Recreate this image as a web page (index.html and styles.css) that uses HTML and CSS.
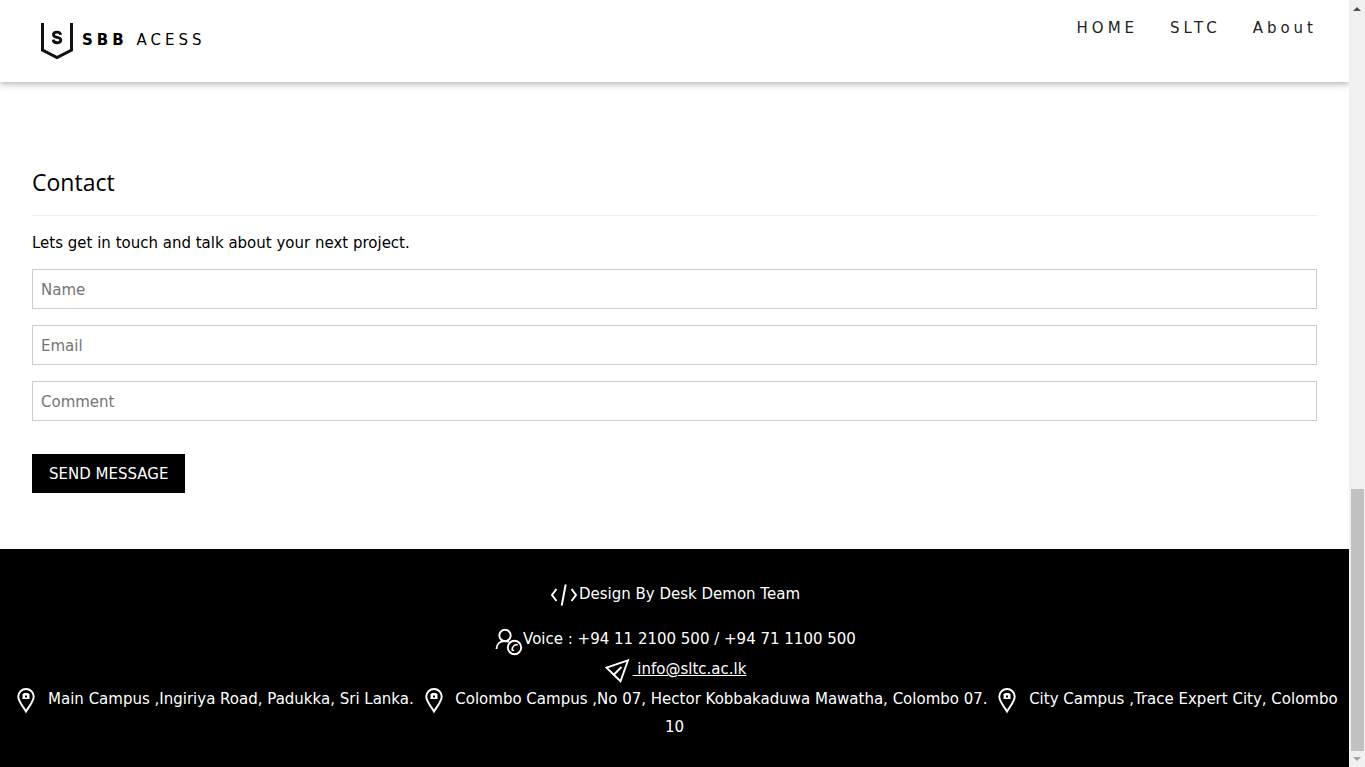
FILE: index.html
```html
<!DOCTYPE html>
<html lang="en">
<head>
<meta charset="utf-8">
<meta name="viewport" content="width=device-width, initial-scale=1">
<title>SBB Acess</title>
<link rel="stylesheet" href="styles.css">
</head>
<body>
<svg class="symbols" aria-hidden="true">
  <symbol id="pin" viewBox="0 0 30 30">
    <path d="M15 26.500C11.500 20.500 7.300 16.500 7.300 11.500a7.700 7.500 0 0 1 15.400 0c0 5-4.200 9-7.700 15z" fill="none" stroke="currentColor" stroke-width="1.900"/>
    <path fill="currentColor" fill-rule="evenodd" d="M11.500 9h1v-1h5v1h1v5h-7zM14 10.500v2h2v-2z"/>
  </symbol>
</svg>
<div class="window">
  <div class="page">
    <header class="bar">
      <a class="brand" href="#home">
        <svg class="brand-mark" viewBox="0 0 34 38" aria-hidden="true">
          <path d="M2.500 1v27L17 35.500 31.500 28V1" fill="none" stroke="#111" stroke-width="3"/>
          <path d="M20.600 12.700c-.3-1.900-1.700-2.600-3.600-2.600-2.100 0-3.500.9-3.500 2.600 0 3.700 7.300 1.700 7.300 5.300 0 1.800-1.600 2.700-3.700 2.700-2.300 0-3.800-.9-3.900-3.100" fill="none" stroke="#111" stroke-width="2.900"/>
        </svg>
        <span><b>SBB</b> ACESS</span>
      </a>
      <nav class="links">
        <a href="#home">HOME</a>
        <a href="#sltc">SLTC</a>
        <a href="#about">About</a>
      </nav>
    </header>
    <main class="contact">
      <h3>Contact</h3>
      <p>Lets get in touch and talk about your next project.</p>
      <form>
        <input type="text" placeholder="Name" aria-label="Name">
        <input type="text" placeholder="Email" aria-label="Email">
        <input type="text" placeholder="Comment" aria-label="Comment">
        <button type="button">SEND MESSAGE</button>
      </form>
    </main>
    <footer class="footer">
      <p class="row credit">
        <svg class="icon" viewBox="0 0 30 30" fill="none" stroke="currentColor" stroke-width="2" aria-hidden="true"><path d="M7.500 10 3 16l4.500 6M22.500 10l4.500 6-4.500 6M16.700 5.500l-4 21"/></svg>
        <span>Design By Desk Demon Team</span>
      </p>
      <p class="row">
        <svg class="icon" viewBox="0 0 30 30" fill="none" stroke="currentColor" stroke-width="1.900" aria-hidden="true"><circle cx="12" cy="11.500" r="5.700"/><path d="M3.500 25c0-5 3.500-8 8.500-8 1.500 0 2.700.3 3.800.9"/><circle cx="21.500" cy="23.500" r="6.700"/><path d="M24.800 20.800c-3.400-.4-5.800 1.800-5.600 5.400l2 .3" stroke-width="1.500"/></svg>
        <span>Voice : +94 11 2100 500 / +94 71 1100 500</span>
      </p>
      <p class="row">
        <svg class="icon" viewBox="0 0 30 30" fill="none" stroke="currentColor" stroke-width="1.900" aria-hidden="true"><path d="M25 6.300 3.500 13.700l6 5.800 8 7.700zM11 20.500l7.500-7.500"/></svg>
        <a href="mailto:info@sltc.ac.lk">&nbsp;info@sltc.ac.lk</a>
      </p>
      <p class="places">
        <svg class="pin" aria-hidden="true"><use href="#pin"/></svg> Main Campus ,Ingiriya Road, Padukka, Sri Lanka.
        <svg class="pin" aria-hidden="true"><use href="#pin"/></svg> Colombo Campus ,No 07, Hector Kobbakaduwa Mawatha, Colombo 07.
        <svg class="pin" aria-hidden="true"><use href="#pin"/></svg> City Campus ,Trace Expert City, Colombo 10
      </p>
    </footer>
  </div>
  <div class="scroll" aria-hidden="true">
    <svg class="arrow" viewBox="0 0 16 16"><path d="M4 11h8L8 7z" fill="#505050"/></svg>
    <div class="track"><div class="thumb"></div></div>
    <svg class="arrow" viewBox="0 0 16 16"><path d="M4 6h8l-4 4z" fill="#a3a3a3"/></svg>
  </div>
</div>
</body>
</html>
```
FILE: styles.css
```css
*, *::before, *::after { box-sizing: border-box; }

body {
  margin: 0;
  background: #fff;
  color: #000;
  font-family: Verdana, "DejaVu Sans", sans-serif;
  font-size: 15px;
  line-height: 22px;
}

p, h3 { margin: 0; }
.symbols { position: absolute; width: 0; height: 0; }

.window {
  display: grid;
  grid-template-columns: 1fr 16px;
  min-height: 100vh;
}
.page { display: flex; flex-direction: column; min-width: 0; }

.bar {
  display: flex;
  justify-content: space-between;
  align-items: flex-start;
  padding: 9px 16px 13px 24px;
  box-shadow: 0 2px 5px rgba(0, 0, 0, .2), 0 2px 10px rgba(0, 0, 0, .12);
  letter-spacing: 4px;
}
.bar a { color: #000; text-decoration: none; }
.brand {
  display: flex;
  align-items: center;
  gap: 8px;
  height: 60px;
  padding: 4px 16px 0;
}
.brand span { padding-bottom: 2px; }
.brand-mark { width: 34px; height: 38px; }
.links { display: flex; }
.links a { padding: 8px 16px; color: #222; }

.contact { padding: 82px 32px 56px; }
.contact h3 {
  padding-bottom: 15px;
  border-bottom: 1px solid #eee;
  font-family: "Segoe UI", "Open Sans", sans-serif;
  font-size: 23px;
  font-weight: 400;
  line-height: 36px;
}
.contact p { margin: 16px 0 15px; }
form { display: flex; flex-direction: column; align-items: flex-start; gap: 16px; }
input {
  width: 100%;
  height: 40px;
  padding: 9px 8px 7px;
  border: 1px solid #ccc;
  font: inherit;
}
input::placeholder { color: #757575; opacity: 1; }
button {
  margin-top: 17px;
  padding: 9px 17px 8px;
  border: 0;
  background: #000;
  color: #fff;
  font: inherit;
}

.footer {
  flex: 1;
  padding: 30px 0 24px;
  background: #000;
  color: #fff;
  text-align: center;
}
.row { display: flex; justify-content: center; height: 30px; line-height: 30px; }
.credit { margin-bottom: 15px; }
.row a { color: inherit; }
.icon { width: 30px; height: 30px; overflow: visible; }
.places { padding: 1px 8px 0; line-height: 28px; }
.pin { width: 30px; height: 30px; margin: -4px 2px -4px 0; vertical-align: -7px; }

.scroll { display: flex; flex-direction: column; background: #f1f1f1; }
.arrow { width: 16px; height: 16px; }
.track { display: flex; flex: 1; align-items: flex-end; }
.thumb { width: 100%; height: 35.6%; margin-left: 2px; margin-right: 1px; background: #c1c1c1; }
```
